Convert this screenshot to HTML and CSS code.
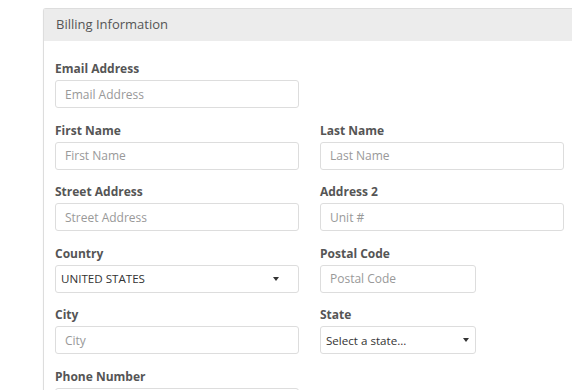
FILE: index.html
```html
<!DOCTYPE html>
<html lang="en">
<head>
    <meta charset="UTF-8">
    <title>Billing Information</title>
    <link rel="stylesheet" href="styles.css">
</head>
<body>
    <div class="panel">
        <div class="panel-heading">Billing Information</div>
        <div class="panel-body">
            <div class="form-grid">
                <div class="field">
                    <label>Email Address</label>
                    <input type="text" class="form-control" placeholder="Email Address">
                </div>
                <div class="field"></div>

                <div class="field">
                    <label>First Name</label>
                    <input type="text" class="form-control" placeholder="First Name">
                </div>
                <div class="field">
                    <label>Last Name</label>
                    <input type="text" class="form-control" placeholder="Last Name">
                </div>

                <div class="field">
                    <label>Street Address</label>
                    <input type="text" class="form-control" placeholder="Street Address">
                </div>
                <div class="field">
                    <label>Address 2</label>
                    <input type="text" class="form-control" placeholder="Unit #">
                </div>

                <div class="field">
                    <label>Country</label>
                    <div class="select-wrap country">
                        <select class="form-control">
                            <option>UNITED STATES</option>
                        </select>
                    </div>
                </div>
                <div class="field">
                    <label>Postal Code</label>
                    <input type="text" class="form-control short" placeholder="Postal Code">
                </div>

                <div class="field">
                    <label>City</label>
                    <input type="text" class="form-control" placeholder="City">
                </div>
                <div class="field">
                    <label>State</label>
                    <div class="select-wrap state short">
                        <select class="form-control">
                            <option>Select a state...</option>
                        </select>
                    </div>
                </div>

                <div class="field">
                    <label>Phone Number</label>
                    <input type="text" class="form-control" placeholder="Phone Number">
                </div>
            </div>
        </div>
    </div>
</body>
</html>
```

FILE: styles.css
```css
* {
    margin: 0;
    padding: 0;
    box-sizing: border-box;
}

html, body {
    overflow: hidden;
}

body {
    font-family: "Open Sans", "Liberation Sans", sans-serif;
    background: #fff;
    color: #333;
    padding: 8px 0 0 43px;
}

.panel {
    width: 600px;
    border: 1px solid #ddd;
    border-right: none;
    border-radius: 3px 0 0 0;
    box-shadow: 0 1px 2px rgba(0, 0, 0, 0.05);
}

.panel-heading {
    height: 32px;
    line-height: 31px;
    padding-left: 12px;
    background: #ececec;
    font-size: 13px;
    color: #555;
}

.panel-body {
    padding: 19px 11px 0;
}

.form-grid {
    display: grid;
    grid-template-columns: 244px 244px;
    column-gap: 21px;
}

.field {
    margin-bottom: 13.6px;
}

.field label {
    display: block;
    font-size: 12px;
    font-weight: 700;
    line-height: 17px;
    color: #555;
    margin-bottom: 3px;
}

.form-control {
    display: block;
    width: 100%;
    height: 28px;
    padding: 0 9px;
    font-family: inherit;
    font-size: 12px;
    color: #333;
    background: #fff;
    border: 1px solid #ddd;
    border-radius: 3px;
    outline: none;
}

.form-control::placeholder {
    color: #999;
}

.short {
    width: 156px;
}

.select-wrap {
    position: relative;
}

.select-wrap select {
    appearance: none;
    -webkit-appearance: none;
    padding-left: 5px;
    font-size: 11.6px;
}

.select-wrap::after {
    content: "";
    position: absolute;
    top: 12px;
    border-left: 3px solid transparent;
    border-right: 3px solid transparent;
    border-top: 4px solid #333;
}

.country::after {
    right: 20px;
}

.state::after {
    right: 7px;
}
```
